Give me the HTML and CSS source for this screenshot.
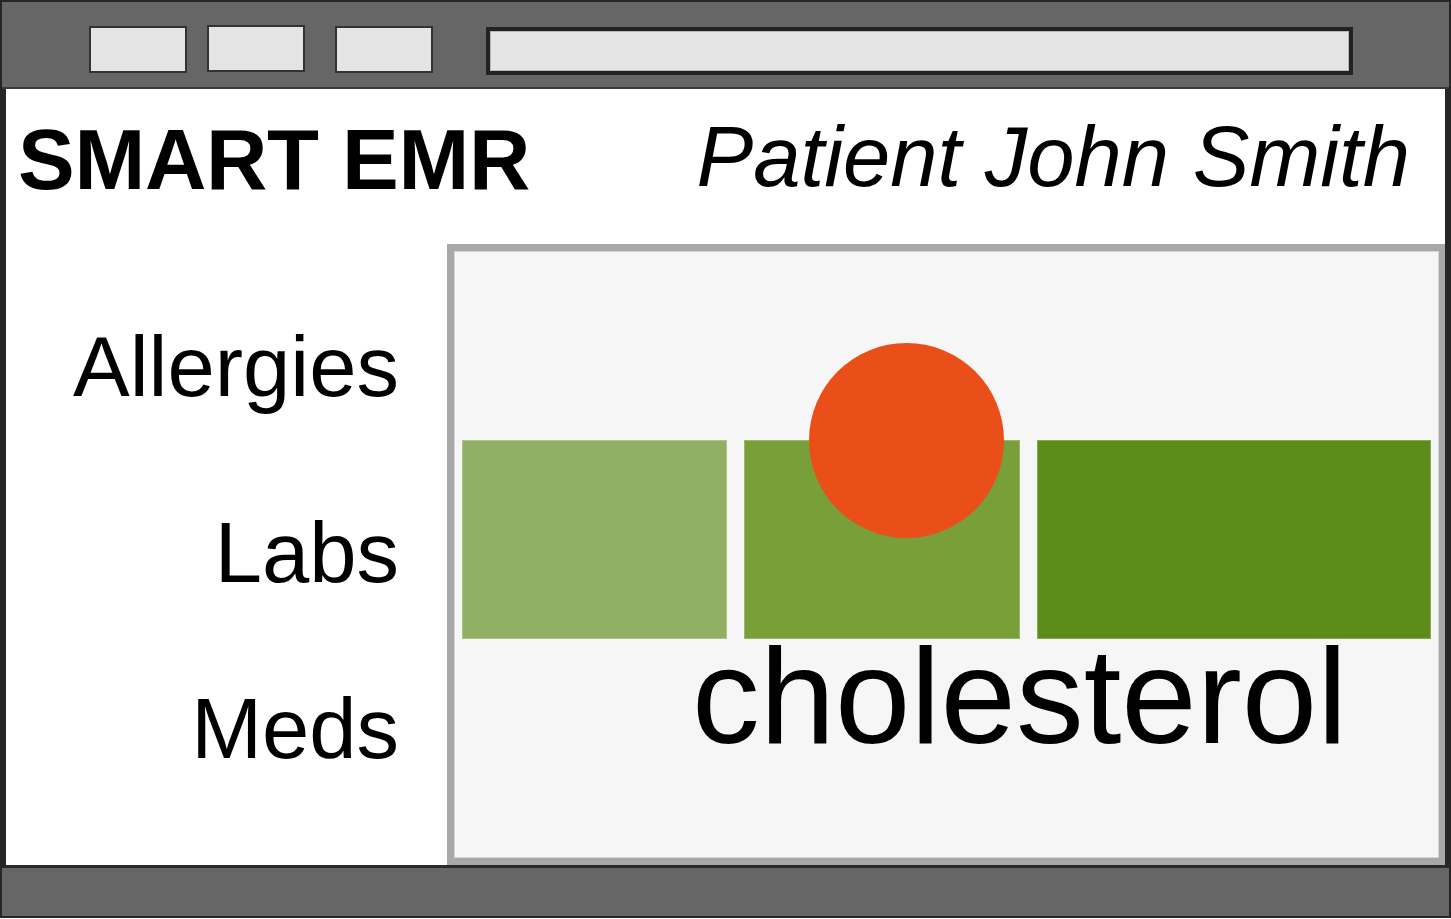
FILE: index.html
```html
<!DOCTYPE html>
<html>
<head>
<meta charset="utf-8">
<title>SMART EMR</title>
<link rel="stylesheet" href="styles.css">
</head>
<body>
<div class="window">
  <div class="toolbar">
    <div class="tab tab-1"></div>
    <div class="tab tab-2"></div>
    <div class="tab tab-3"></div>
    <div class="address"></div>
  </div>
  <div class="content">
    <header class="header">
      <h1 class="brand">SMART EMR</h1>
      <div class="patient">Patient John Smith</div>
    </header>
    <div class="body">
      <nav class="nav">
        <div class="nav-item nav-item-first">Allergies</div>
        <div class="nav-item">Labs</div>
        <div class="nav-item">Meds</div>
      </nav>
      <section class="panel">
        <div class="bars">
          <div class="bar bar-low"></div>
          <div class="bar bar-mid"><span class="marker"></span></div>
          <div class="bar bar-high"></div>
        </div>
        <div class="lab-name">cholesterol</div>
      </section>
    </div>
  </div>
  <div class="statusbar"></div>
</div>
</body>
</html>
```
FILE: styles.css
```css
* { box-sizing: border-box; }
html, body { margin: 0; padding: 0; background: #ffffff; }
body {
  font-family: "Liberation Sans", Arial, sans-serif;
  color: #000;
  width: 1451px;
  height: 919px;
  overflow: hidden;
}
.window {
  width: 1451px;
  height: 918px;
  border: 2px solid #262626;
  display: flex;
  flex-direction: column;
  background: #666666;
}
.toolbar {
  height: 87px;
  flex: 0 0 auto;
  background: #666666;
  border-bottom: 2px solid #3a3a3a;
  display: flex;
  align-items: flex-start;
  padding-left: 87px;
  padding-top: 24px;
}
.tab {
  width: 98px;
  height: 47px;
  background: #e4e4e4;
  border: 2px solid #333333;
}
.tab-2 { margin-left: 20px; margin-top: -1px; }
.tab-3 { margin-left: 30px; }
.address {
  margin-left: 53px;
  margin-top: 1px;
  width: 867px;
  height: 48px;
  background: #e4e4e4;
  border: 4px solid #222222;
  box-shadow: inset 0 0 0 1px #b8b8b8;
}
.content {
  flex: 1 1 auto;
  background: #ffffff;
  border-left: 4px solid #262626;
  border-right: 4px solid #262626;
  border-bottom: 3px solid #2a2a2a;
  display: flex;
  flex-direction: column;
}
.header {
  height: 155px;
  flex: 0 0 auto;
  display: flex;
  justify-content: space-between;
  align-items: flex-start;
  padding: 28px 35px 0 12px;
}
.brand {
  margin: 0;
  font-size: 85px;
  line-height: 1;
  font-weight: bold;
  letter-spacing: -0.3px;
}
.patient {
  margin-top: -3px;
  font-size: 85px;
  line-height: 1;
  font-style: italic;
}
.body {
  flex: 1 1 auto;
  display: flex;
}
.nav {
  width: 441px;
  flex: 0 0 auto;
  display: flex;
  flex-direction: column;
  align-items: flex-end;
  padding: 80px 48px 0 0;
  gap: 91px;
}
.nav-item {
  font-size: 85px;
  line-height: 85px;
}
.nav-item-first { margin-bottom: 10px; }
.panel {
  flex: 1 1 auto;
  background: #f6f6f6;
  border-style: solid;
  border-color: #a8a8a8;
  border-width: 7px 6px 7px 7px;
  box-shadow: inset 0 0 0 1px #d6d6d6;
  padding: 189px 8px 0 8px;
}
.bars {
  display: flex;
  gap: 17px;
  height: 199px;
}
.bar {
  height: 199px;
  box-shadow: inset 0 0 0 1px rgba(255, 255, 255, 0.25);
}
.bar-low { width: 265px; background: #92b063; }
.bar-mid { width: 276px; background: #789f38; position: relative; }
.bar-high { width: 394px; background: #5e8c1b; }
.marker {
  position: absolute;
  left: 65px;
  top: -97px;
  width: 195px;
  height: 195px;
  border-radius: 50%;
  background: #eb4f19;
}
.lab-name {
  margin-top: -10px;
  padding-left: 230px;
  font-size: 135.5px;
  line-height: 1;
}
.statusbar {
  height: 48px;
  flex: 0 0 auto;
  background: #666666;
}
```
